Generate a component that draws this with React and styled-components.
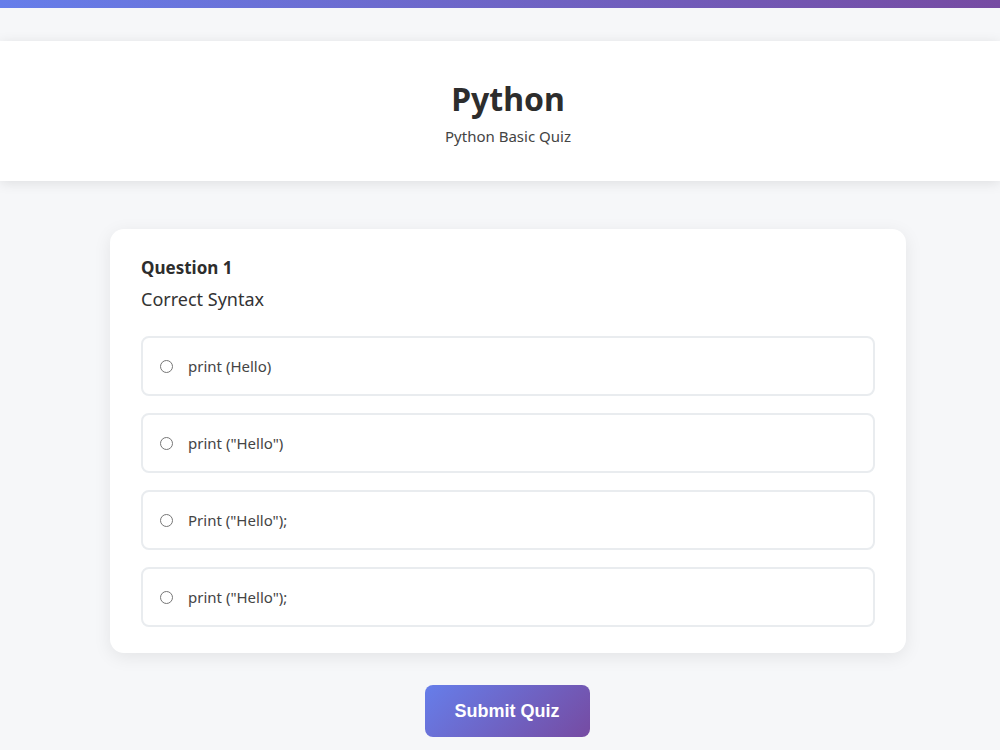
import React from "react";
import styled, { createGlobalStyle } from "styled-components";

const GlobalStyle = createGlobalStyle`
  html, body {
    margin: 0;
    padding: 0;
    background: #f6f7f9;
    font-family: "Noto Sans", "Open Sans", sans-serif;
    color: #333;
    overflow: hidden;
  }
  * { box-sizing: border-box; }
`;

const TopBar = styled.div`
  height: 8px;
  background: linear-gradient(90deg, #667eea 0%, #764ba2 100%);
`;

const Header = styled.header`
  margin-top: 33px;
  height: 140px;
  background: #fff;
  box-shadow: 0 2px 12px rgba(0, 0, 0, 0.1);
  display: flex;
  flex-direction: column;
  align-items: center;
  justify-content: center;
  padding: 4px 0 0 16px;

  h1 {
    margin: 0;
    font-size: 32px;
    font-weight: 700;
    color: #2d2d2d;
    line-height: 1.2;
  }

  p {
    margin: 7px 0 0;
    font-size: 15px;
    color: #444;
  }
`;

const Main = styled.main`
  padding: 48px 94px 0 110px;
  display: flex;
  flex-direction: column;
  align-items: center;
`;

const Card = styled.section`
  width: 796px;
  background: #fff;
  border-radius: 14px;
  box-shadow: 0 4px 18px rgba(0, 0, 0, 0.08);
  padding: 27px 31px 26px;
`;

const QuestionNo = styled.h3`
  margin: 0;
  font-size: 17px;
  font-weight: 700;
  color: #2d2d2d;
  line-height: 24px;
`;

const QuestionText = styled.p`
  margin: 6px 0 24px;
  font-size: 18px;
  color: #333;
  line-height: 26px;
`;

const Options = styled.div`
  display: flex;
  flex-direction: column;
  gap: 17px;
`;

const Option = styled.label`
  height: 60px;
  border: 2px solid #e9ecef;
  border-radius: 8px;
  display: flex;
  align-items: center;
  padding-left: 16px;
  gap: 15px;
  font-size: 15px;
  color: #444;
  cursor: pointer;
`;

const Radio = styled.span`
  width: 13px;
  height: 13px;
  border: 1px solid #767676;
  border-radius: 50%;
  margin-left: 1px;
  flex-shrink: 0;
`;

const SubmitButton = styled.button`
  margin-top: 32px;
  margin-left: -2px;
  width: 165px;
  height: 52px;
  border: none;
  border-radius: 8px;
  background: linear-gradient(135deg, #667eea 0%, #764ba2 100%);
  color: #fff;
  font-family: "Liberation Sans", Arial, sans-serif;
  font-size: 18px;
  font-weight: 700;
  cursor: pointer;
`;

const options = ['print (Hello)', 'print ("Hello")', 'Print ("Hello");', 'print ("Hello");'];

export default function App() {
  return (
    <>
      <GlobalStyle />
      <TopBar />
      <Header>
        <h1>Python</h1>
        <p>Python Basic Quiz</p>
      </Header>
      <Main>
        <Card>
          <QuestionNo>Question 1</QuestionNo>
          <QuestionText>Correct Syntax</QuestionText>
          <Options>
            {options.map((o) => (
              <Option key={o}>
                <Radio />
                {o}
              </Option>
            ))}
          </Options>
        </Card>
        <SubmitButton>Submit Quiz</SubmitButton>
      </Main>
    </>
  );
}
